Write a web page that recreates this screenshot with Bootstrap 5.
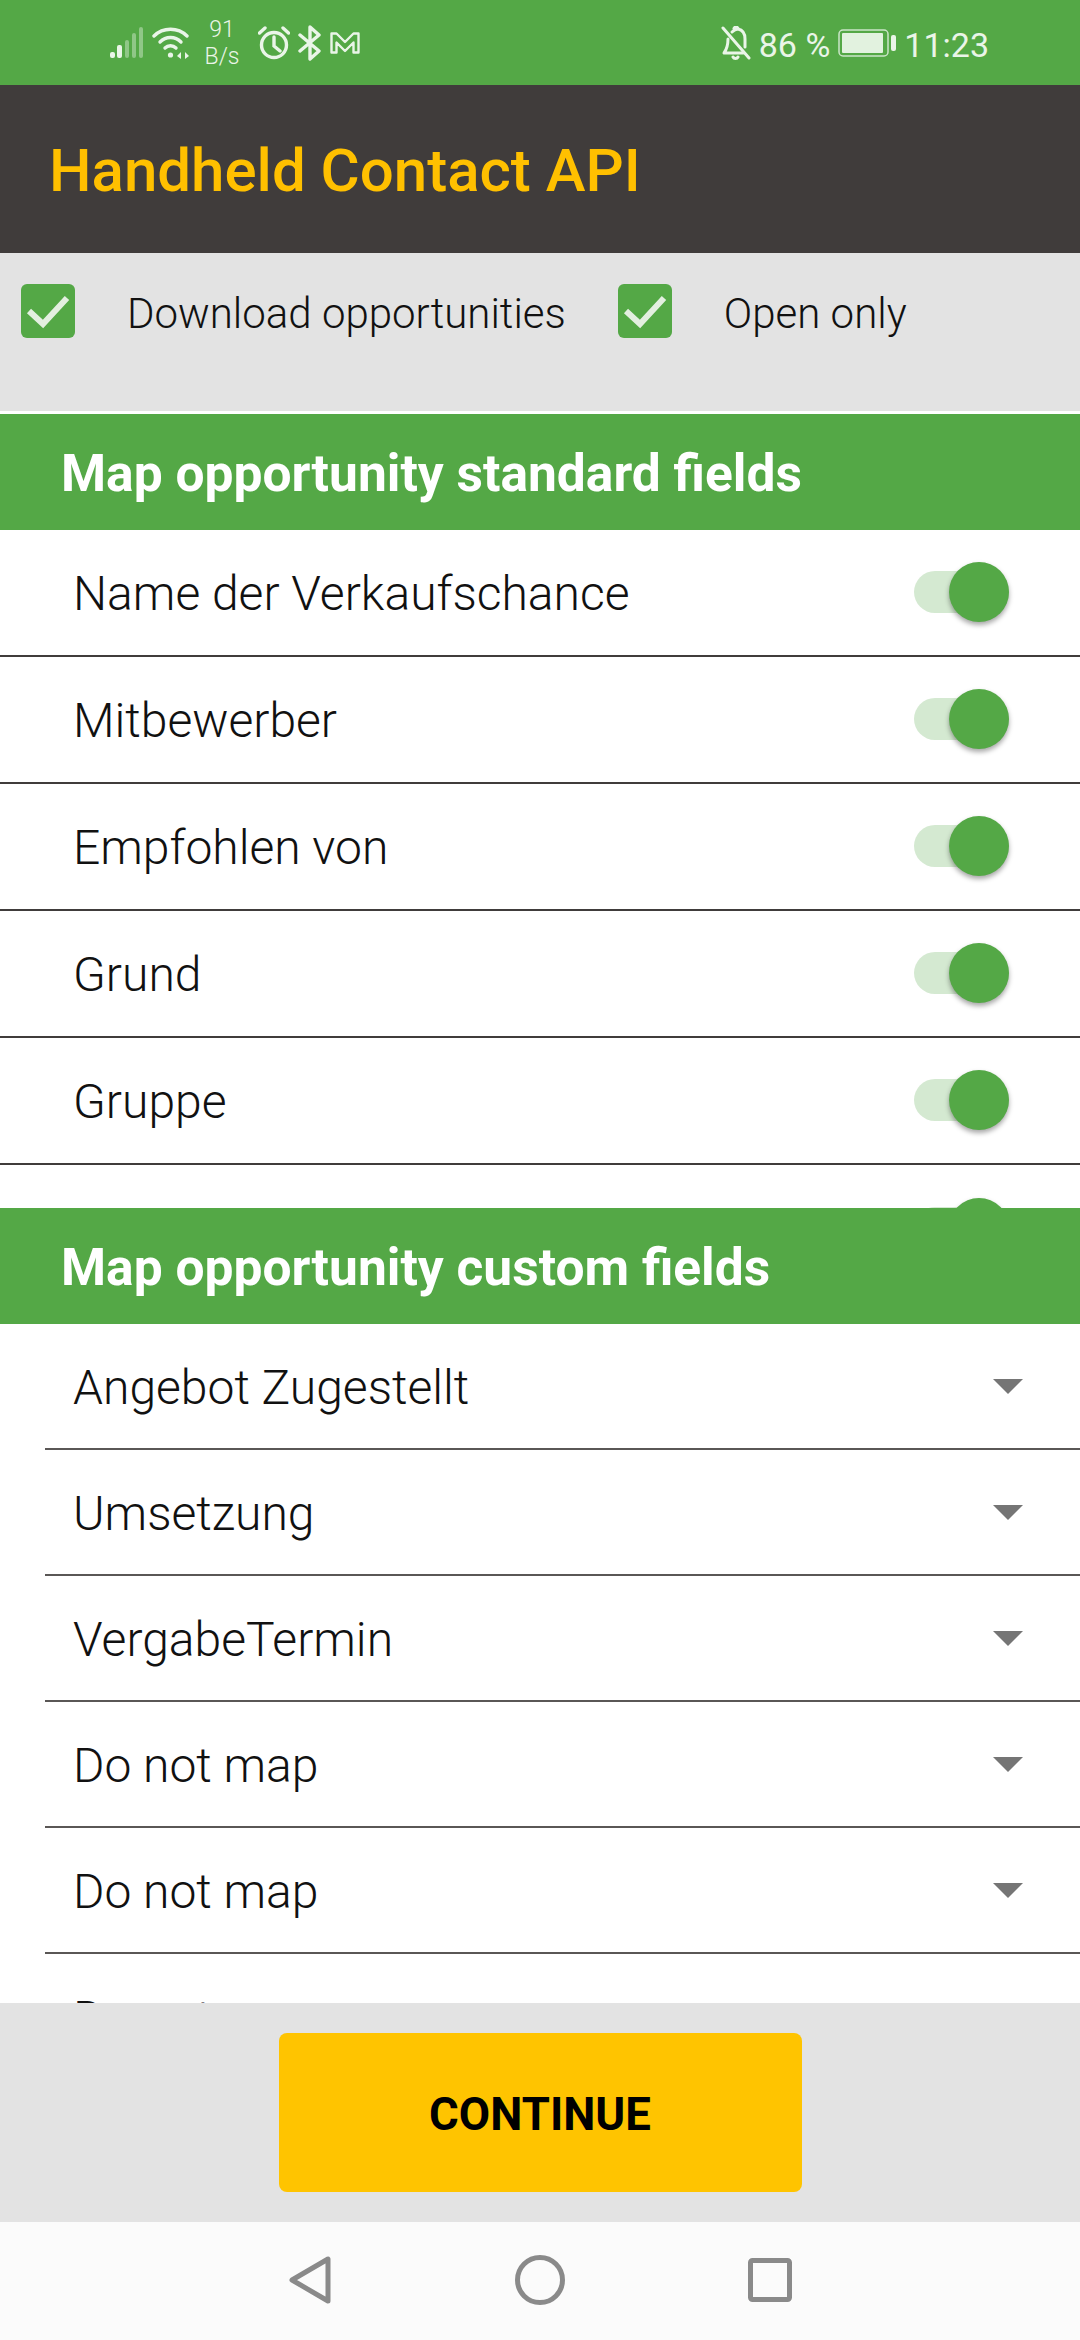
<!DOCTYPE html>
<html lang="en">
<head>
    <meta charset="UTF-8">
    <meta name="viewport" content="width=device-width, initial-scale=1.0">
    <title>Handheld Contact API</title>
    <link href="https://cdn.jsdelivr.net/npm/bootstrap@5.3.3/dist/css/bootstrap.min.css" rel="stylesheet">
    <style>
        html, body {
            height: 100%;
        }

        body {
            width: 1080px;
            height: 2340px;
            overflow: hidden;
            background-color: #fff;
            font-family: Roboto, "Liberation Sans", sans-serif;
            color: #111;
        }

        .status-strip {
            height: 85px;
            background-color: #54a846;
            color: #eaf5e8;
            padding: 0 91px 0 110px;
            font-size: 34px;
            font-weight: 400;
        }

        .status-text {
            padding-top: 5px;
        }

        .net-speed {
            width: 36px;
            margin: 0 18px 0 14px;
            font-size: 23px;
            font-weight: 300;
            line-height: 27px;
            text-align: center;
        }

        .app-bar {
            height: 168px;
            padding: 4px 0 0 49px;
            background-color: #403c3b;
            color: #ffc000;
            font-size: 60px;
            font-weight: 500;
        }

        .option-bar {
            height: 161px;
            padding: 31px 0 0 21px;
            background-color: #e3e3e3;
            border-bottom: 3px solid #fff;
            font-size: 42px;
            font-weight: 300;
        }

        .option-bar .form-check-input {
            width: 54px;
            height: 54px;
            margin: 0;
            float: none;
            flex: none;
            border: 0;
            border-radius: 6px;
            background-color: #54a846;
            background-size: 54px;
            background-image: url("data:image/svg+xml,%3csvg xmlns='http://www.w3.org/2000/svg' viewBox='0 0 54 54'%3e%3cpath fill='none' stroke='%23e3efe0' stroke-width='6' d='M8 27l14 13L46 14'/%3e%3c/svg%3e");
        }

        .option-label {
            margin: 0 52px;
            line-height: 60px;
        }

        .section-head {
            height: 116px;
            padding: 4px 0 0 61px;
            background-color: #54a846;
            color: #fff;
            font-size: 51.500px;
            font-weight: 700;
            position: relative;
        }

        .field-scroll {
            overflow: hidden;
            background-color: #fff;
        }

        .field-scroll.standard {
            height: 678px;
        }

        .field-scroll.custom {
            height: 679px;
        }

        .field-scroll .list-group-item {
            background: transparent;
            font-size: 48px;
            font-weight: 300;
            color: #111;
            padding: 2px 71px 0 73px;
        }

        .standard .list-group-item {
            height: 127px;
            border-bottom: 2px solid #403c3b;
        }

        .custom .list-group-item {
            height: 126px;
            margin-left: 45px;
            padding: 4px 57px 0 28px;
            border-bottom: 2px solid #5a5756;
            border-width: 0 0 2px;
        }

        .map-switch {
            position: relative;
            width: 95px;
            height: 42px;
            margin-top: -4px;
            margin-left: auto;
            border-radius: 21px;
            background-color: #d4e9d1;
        }

        .map-switch::after {
            content: "";
            position: absolute;
            right: 0;
            top: -9px;
            width: 60px;
            height: 60px;
            border-radius: 50%;
            background-color: #54a846;
            box-shadow: 0 3px 5px rgba(0, 0, 0, .35);
        }

        .drop-arrow {
            width: 0;
            height: 0;
            margin-top: -4px;
            border-left: 15px solid transparent;
            border-right: 15px solid transparent;
            border-top: 15px solid #757575;
        }

        .action-bar {
            height: 219px;
            background-color: #e3e3e3;
            position: relative;
        }

        .continue-btn {
            width: 523px;
            height: 159px;
            padding-top: 12px;
            border: 0;
            border-radius: 8px;
            background-color: #ffc400;
            color: #000;
            font-size: 45.500px;
            font-weight: 700;
        }

        .continue-btn:hover, .continue-btn:active {
            background-color: #ffc400;
            color: #000;
        }

        .nav-strip {
            height: 118px;
            gap: 183px;
            background-color: #fbfbfb;
            padding-bottom: 3px;
        }

        .nav-strip svg {
            fill: none;
            stroke: #8a8a8a;
            stroke-width: 5;
        }

        .wifi-icon {
            margin-left: 6px;
        }
    </style>
</head>
<body>
    <div class="status-strip d-flex align-items-center">
        <svg width="36" height="34" viewBox="0 0 36 34" fill="#eaf5e8">
            <rect x="0" y="26" width="5" height="6" rx="2"/>
            <rect x="7" y="19" width="5" height="13" rx="2"/>
            <rect x="15" y="14" width="4" height="18" rx="2" opacity=".4"/>
            <rect x="22" y="7" width="4" height="25" rx="2" opacity=".4"/>
            <rect x="29" y="1" width="4" height="31" rx="2" opacity=".4"/>
        </svg>
        <svg class="wifi-icon" width="38" height="34" viewBox="0 0 38 34" fill="none" stroke="#eaf5e8" stroke-width="3.4" stroke-linecap="round">
            <path d="M2 10C11 1 26 1 35 10"/>
            <path d="M8 16C14 10 23 10 29 16"/>
            <path d="M13 22C16 19 21 19 24 22"/>
            <circle cx="18.500" cy="29" r="2.600" fill="#eaf5e8" stroke="none"/>
            <path d="M29 26l-4 4 4 3zM33 26l4 4-4 3z" fill="#eaf5e8" stroke="none"/>
        </svg>
        <div class="net-speed"><div>91</div><div>B/s</div></div>
        <svg width="32" height="34" viewBox="0 0 32 34" fill="none" stroke="#eaf5e8" stroke-width="3.400">
            <circle cx="16" cy="19" r="12.500"/>
            <path d="M16 11v9l6 5M1.500 7L7 2M30.500 7L25 2" stroke-linecap="round"/>
        </svg>
        <svg class="ms-2" width="24" height="36" viewBox="0 0 24 36" fill="none" stroke="#eaf5e8" stroke-width="3.400" stroke-linejoin="round" stroke-linecap="round">
            <path d="M2 10l19 16-9 8V2l9 8L2 26"/>
        </svg>
        <svg class="ms-2" width="30" height="24" viewBox="0 0 30 24" fill="none" stroke="#eaf5e8" stroke-width="2.400" stroke-linejoin="round">
            <path d="M1.500 2.500h5L15 11l8.500-8.500h5v19h-5v-10L15 20l-8.500-8.500v10h-5z"/>
        </svg>

        <svg class="ms-auto" width="30" height="34" viewBox="0 0 30 34" fill="none" stroke="#eaf5e8" stroke-width="3" stroke-linejoin="round" stroke-linecap="round">
            <path d="M2 2l26 30"/>
            <path d="M7 13c0 6-1 10-4 14h19M11 6c3-3 4-3 6-3 5 1 7 5 7 10v8"/>
            <path d="M13 2.500c1-2 3-2 4 0M12 31c1 2 4 2 5 0"/>
        </svg>
        <span class="status-text ms-2">86 %</span>
        <svg class="ms-2" width="58" height="28" viewBox="0 0 58 28" fill="#eaf5e8">
            <rect x="1" y="1" width="49" height="26" rx="4" fill="none" stroke="#eaf5e8" stroke-width="1.500" opacity=".8"/>
            <rect x="4" y="4" width="41" height="20" rx="1" opacity=".95"/>
            <rect x="53" y="6" width="5" height="16" rx="2"/>
        </svg>
        <span class="status-text ms-2">11:23</span>
    </div>

    <div class="app-bar d-flex align-items-center">Handheld Contact API</div>

    <div class="option-bar d-flex align-items-start">
        <input class="form-check-input" type="checkbox" id="download-opps" checked>
        <label class="option-label" for="download-opps">Download opportunities</label>
        <input class="form-check-input" type="checkbox" id="open-only" checked>
        <label class="option-label" for="open-only">Open only</label>
    </div>

    <div class="section-head d-flex align-items-center">Map opportunity standard fields</div>
    <div class="field-scroll standard">
        <ul class="list-group list-group-flush">
            <li class="list-group-item d-flex align-items-center">Name der Verkaufschance<span class="map-switch"></span></li>
            <li class="list-group-item d-flex align-items-center">Mitbewerber<span class="map-switch"></span></li>
            <li class="list-group-item d-flex align-items-center">Empfohlen von<span class="map-switch"></span></li>
            <li class="list-group-item d-flex align-items-center">Grund<span class="map-switch"></span></li>
            <li class="list-group-item d-flex align-items-center">Gruppe<span class="map-switch"></span></li>
            <li class="list-group-item d-flex align-items-center"><span class="map-switch"></span></li>
        </ul>
    </div>

    <div class="section-head d-flex align-items-center">Map opportunity custom fields</div>
    <div class="field-scroll custom">
        <ul class="list-group list-group-flush">
            <li class="list-group-item d-flex align-items-center justify-content-between">Angebot Zugestellt<span class="drop-arrow"></span></li>
            <li class="list-group-item d-flex align-items-center justify-content-between">Umsetzung<span class="drop-arrow"></span></li>
            <li class="list-group-item d-flex align-items-center justify-content-between">VergabeTermin<span class="drop-arrow"></span></li>
            <li class="list-group-item d-flex align-items-center justify-content-between">Do not map<span class="drop-arrow"></span></li>
            <li class="list-group-item d-flex align-items-center justify-content-between">Do not map<span class="drop-arrow"></span></li>
            <li class="list-group-item d-flex align-items-center justify-content-between">Do not map<span class="drop-arrow"></span></li>
        </ul>
    </div>

    <div class="action-bar d-flex align-items-center justify-content-center">
        <button class="btn continue-btn" type="button">CONTINUE</button>
    </div>

    <div class="nav-strip d-flex align-items-center justify-content-center">
        <svg width="44" height="50" viewBox="0 0 44 50">
            <path d="M40 4v42L4 25z" stroke-linejoin="round"/>
        </svg>
        <svg width="50" height="50" viewBox="0 0 50 50">
            <circle cx="25" cy="25" r="22.500"/>
        </svg>
        <svg width="44" height="44" viewBox="0 0 44 44">
            <rect x="2.500" y="2.500" width="39" height="39" rx="2"/>
        </svg>
    </div>
</body>
</html>
